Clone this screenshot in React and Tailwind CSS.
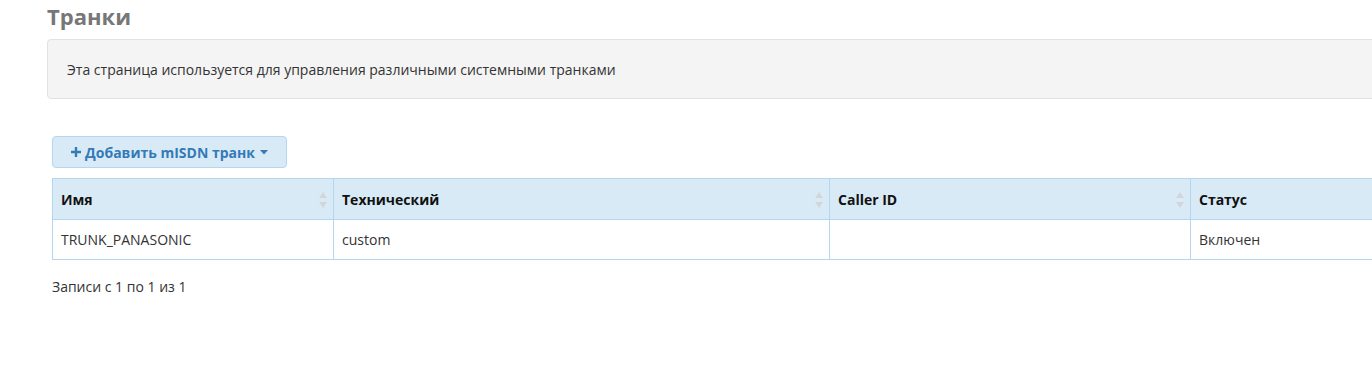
import React from "react"

const SortIcon = () => (
  <svg width="8" height="16" viewBox="0 0 8 16" className="shrink-0">
    <path d="M4 0 L8 6 L0 6 Z" fill="#d2d6da" />
    <path d="M4 16 L8 10 L0 10 Z" fill="#d2d6da" />
  </svg>
)

function HeadCell({ children, width }) {
  return (
    <th
      className="border border-[#b4d6f0] bg-[#d9eaf7] pl-2 pr-[6px] text-left font-bold text-[14px] text-[#111] h-[41px]"
      style={{ width }}
    >
      <div className="flex items-center justify-between">
        <span>{children}</span>
        <span className="mt-[1px]">
          <SortIcon />
        </span>
      </div>
    </th>
  )
}

function Cell({ children }) {
  return (
    <td className="border border-[#b4d6f0] px-2 h-[40px] text-[14px] text-[#333]">
      {children}
    </td>
  )
}

export default function App() {
  const columns = [
    { name: "Имя", width: 281 },
    { name: "Технический", width: 496 },
    { name: "Caller ID", width: 361 },
    { name: "Статус", width: 300 },
  ]

  return (
    <div className="w-[1372px] h-[370px] overflow-hidden bg-white font-['Open_Sans',sans-serif]">
      <div className="pl-[47px] w-[1600px]">
        <h1 className="mt-[3px] text-[22px] leading-[26px] font-bold text-[#777]">Транки</h1>

        <div className="mt-[10px] h-[60px] flex items-center px-[19px] bg-[#f4f4f4] border border-[#e2e2e2] rounded-[4px] text-[14px] text-[#333]">
          Эта страница используется для управления различными системными транками
        </div>

        <div className="ml-[5px]">
          <button className="mt-[37px] h-[32px] w-[235px] flex items-center justify-center gap-[4px] rounded-[4px] border border-[#b4d6f0] bg-[#d9eaf7] text-[14px] font-bold text-[#337ab7]">
            <svg width="10" height="10" viewBox="0 0 10 10">
              <path d="M3.8 0h2.4v3.8H10v2.4H6.2V10H3.8V6.2H0V3.8h3.8z" fill="#337ab7" />
            </svg>
            <span>Добавить mISDN транк</span>
            <svg width="8" height="5" viewBox="0 0 8 5" className="ml-[1px]">
              <path d="M0 0h8L4 4.5z" fill="#337ab7" />
            </svg>
          </button>

          <table className="mt-[10px] border-collapse table-fixed" style={{ width: 1438 }}>
            <thead>
              <tr>
                {columns.map((c) => (
                  <HeadCell key={c.name} width={c.width}>{c.name}</HeadCell>
                ))}
              </tr>
            </thead>
            <tbody>
              <tr>
                <Cell>TRUNK_PANASONIC</Cell>
                <Cell>custom</Cell>
                <Cell></Cell>
                <Cell>Включен</Cell>
              </tr>
            </tbody>
          </table>

          <div className="mt-[17px] text-[14px] leading-[20px] text-[#333]">Записи с 1 по 1 из 1</div>
        </div>
      </div>
    </div>
  )
}
